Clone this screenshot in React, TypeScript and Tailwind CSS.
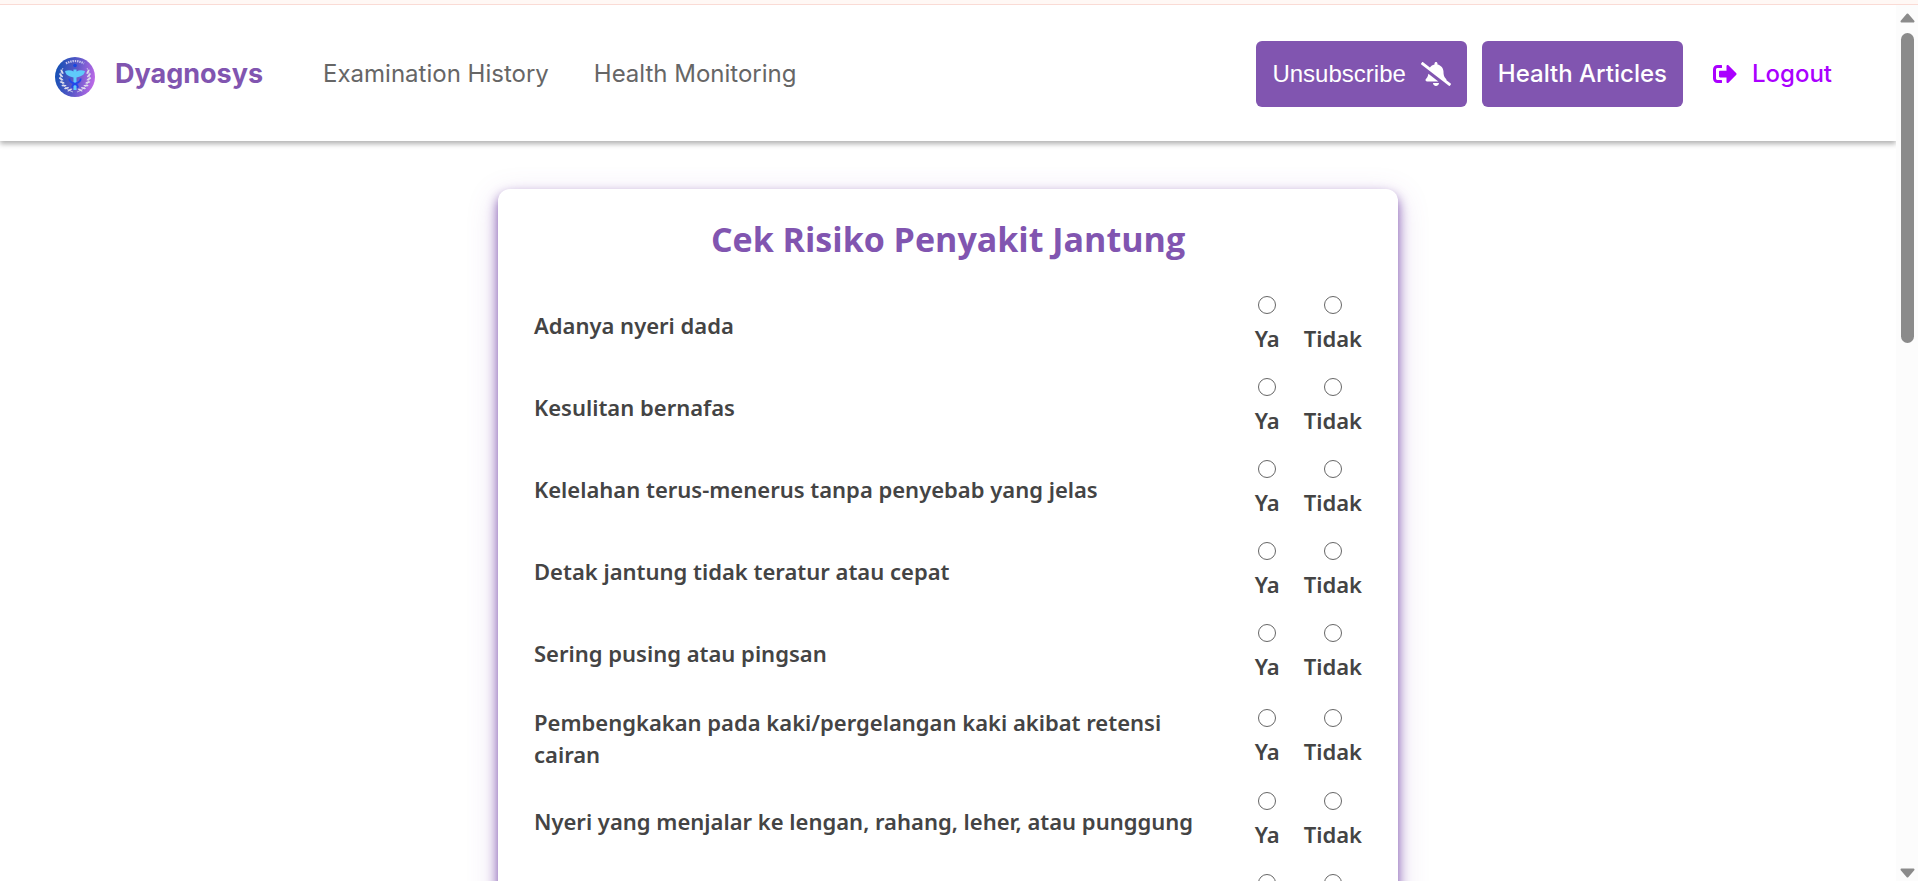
import { FaBellSlash, FaSignOutAlt } from "react-icons/fa";

const questions = [
  "Adanya nyeri dada",
  "Kesulitan bernafas",
  "Kelelahan terus-menerus tanpa penyebab yang jelas",
  "Detak jantung tidak teratur atau cepat",
  "Sering pusing atau pingsan",
  "Pembengkakan pada kaki/pergelangan kaki akibat retensi cairan",
  "Nyeri yang menjalar ke lengan, rahang, leher, atau punggung",
  "Keringat dingin dan mual",
];

function Logo() {
  const leaves = [0, 1, 2, 3, 4, 5, 6];
  return (
    <svg viewBox="0 0 40 40" className="mt-1.5 size-10" aria-hidden="true">
      <defs>
        <linearGradient id="disc" x1="0" y1="0.4" x2="1" y2="0.6">
          <stop offset="0" stopColor="#1450b4" />
          <stop offset="0.5" stopColor="#5a58c8" />
          <stop offset="1" stopColor="#c06ae8" />
        </linearGradient>
      </defs>
      <circle cx="20" cy="20" r="20" fill="url(#disc)" />
      <path d="M11 6.500Q20 1.500 29 6.500" fill="none" stroke="#c9c6ee" strokeWidth="2.200" strokeDasharray="1.400 0.900" />
      <g fill="none" stroke="#cfd0ea" strokeWidth="0.800">
        <path d="M8 11C3 19 6 31 18 35" />
        <path d="M32 11C37 19 34 31 22 35" />
      </g>
      <g fill="#dcdcec">
        {leaves.map((i) => {
          const a = ((158 + i * 15) * Math.PI) / 180;
          const dx = Math.cos(a) * 14;
          const dy = -Math.sin(a) * 14;
          return (
            <g key={i}>
              <ellipse cx={20 + dx} cy={20 + dy} rx="2.600" ry="0.900" transform={`rotate(${60 - i * 15} ${20 + dx} ${20 + dy})`} />
              <ellipse cx={20 - dx} cy={20 + dy} rx="2.600" ry="0.900" transform={`rotate(${i * 15 - 60} ${20 - dx} ${20 + dy})`} />
            </g>
          );
        })}
      </g>
      <circle cx="20" cy="8.500" r="1.800" fill="#1747e0" />
      <path d="M10 14Q15 12.500 18.500 14.500V12.500H21.500V14.500Q25 12.500 30 14Q29.500 18 25 19.500L21.500 20.500V33H18.500V20.500L15 19.500Q10.500 18 10 14Z" fill="#5fcbfb" />
      <path d="M14.500 21.500C13 27 25 26 22.500 31M25.500 21.500C27 27 15 26 17.500 31" fill="none" stroke="#2146ea" strokeWidth="1.800" />
    </svg>
  );
}

function Header() {
  return (
    <header className="relative z-10 flex h-[136px] shrink-0 items-center bg-white pt-[2px] pr-16 pl-[55px] font-['Inter',sans-serif] text-2xl shadow-[0_3px_5px_rgba(0,0,0,0.3)]">
      <a href="#home" className="flex items-center gap-5 text-[27px] font-bold text-[#8155b0]">
        <Logo />
        Dyagnosys
      </a>
      <nav className="ml-[60px] flex gap-[45px] text-[#666666]">
        <a href="#history">Examination History</a>
        <a href="#monitoring">Health Monitoring</a>
      </nav>
      <div className="ml-auto flex items-center gap-[15px]">
        <button
          type="button"
          className="flex h-[66px] items-center gap-[15px] rounded-md bg-[#8155b0] px-4 font-['Liberation_Sans',Arial,sans-serif] text-white"
        >
          Unsubscribe
          <FaBellSlash className="h-6 w-[30px]" />
        </button>
        <a href="#articles" className="flex h-[66px] items-center rounded-md bg-[#8155b0] px-4 font-medium text-white">
          Health Articles
        </a>
        <button type="button" className="flex items-center gap-[15px] pl-[15px] font-medium text-[#aa00ff]">
          <FaSignOutAlt className="size-6" />
          Logout
        </button>
      </div>
    </header>
  );
}

function Choice({ name, value }: { name: string; value: string }) {
  return (
    <label className="flex flex-col items-center gap-2">
      <input
        type="radio"
        name={name}
        value={value}
        className="size-[18px] appearance-none rounded-full border border-[#666666] bg-white checked:border-[5px] checked:border-[#8155b0]"
      />
      {value}
    </label>
  );
}

function RiskForm() {
  return (
    <form className="mx-auto mt-12 mb-12 w-full max-w-[900px] rounded-xl bg-white px-9 pt-[23px] pb-9 font-['Noto_Sans','Open_Sans',sans-serif] shadow-[0_6px_12px_#8155b0,0_9px_30px_#8155b040]">
      <h1 className="text-center font-['Open_Sans','Noto_Sans',sans-serif] text-[34px] leading-[54px] font-bold text-[#8155b0]">
        Cek Risiko Penyakit Jantung
      </h1>
      <div className="mt-[19px] text-[22px] leading-8 font-semibold text-[#444444]">
        {questions.map((question, i) => (
          <fieldset key={question} aria-label={question} className="flex min-h-[82px] items-center justify-between gap-6 py-[11px]">
            <p className="max-w-[680px]">{question}</p>
            <div className="flex gap-6">
              <Choice name={`q${i}`} value="Ya" />
              <Choice name={`q${i}`} value="Tidak" />
            </div>
          </fieldset>
        ))}
      </div>
    </form>
  );
}

function ScrollRail() {
  return (
    <div aria-hidden="true" className="flex w-[22px] shrink-0 flex-col items-center bg-[#fcfcfc] pt-2 pb-[3px]">
      <svg viewBox="0 0 15 10" className="h-[10px] w-[15px]">
        <path d="M7.500 1.500L13.500 8.500H1.500Z" fill="#8b8b8b" stroke="#8b8b8b" strokeWidth="2" strokeLinejoin="round" />
      </svg>
      <div className="mt-[10px] h-[310px] w-[13px] rounded-full bg-[#8b8b8b]" />
      <svg viewBox="0 0 15 10" className="mt-auto h-[10px] w-[15px]">
        <path d="M7.500 8.500L13.500 1.500H1.500Z" fill="#8b8b8b" stroke="#8b8b8b" strokeWidth="2" strokeLinejoin="round" />
      </svg>
    </div>
  );
}

export default function App() {
  return (
    <div className="flex h-screen flex-col overflow-hidden bg-white">
      <div className="h-[5px] shrink-0 border-b border-[#fadbd5] bg-[#fff8f5]" />
      <div className="flex min-h-0 flex-1">
        <div className="flex min-w-0 flex-1 flex-col overflow-hidden">
          <Header />
          <main className="min-h-0 flex-1 overflow-y-auto [scrollbar-width:none]">
            <RiskForm />
          </main>
        </div>
        <ScrollRail />
      </div>
    </div>
  );
}
